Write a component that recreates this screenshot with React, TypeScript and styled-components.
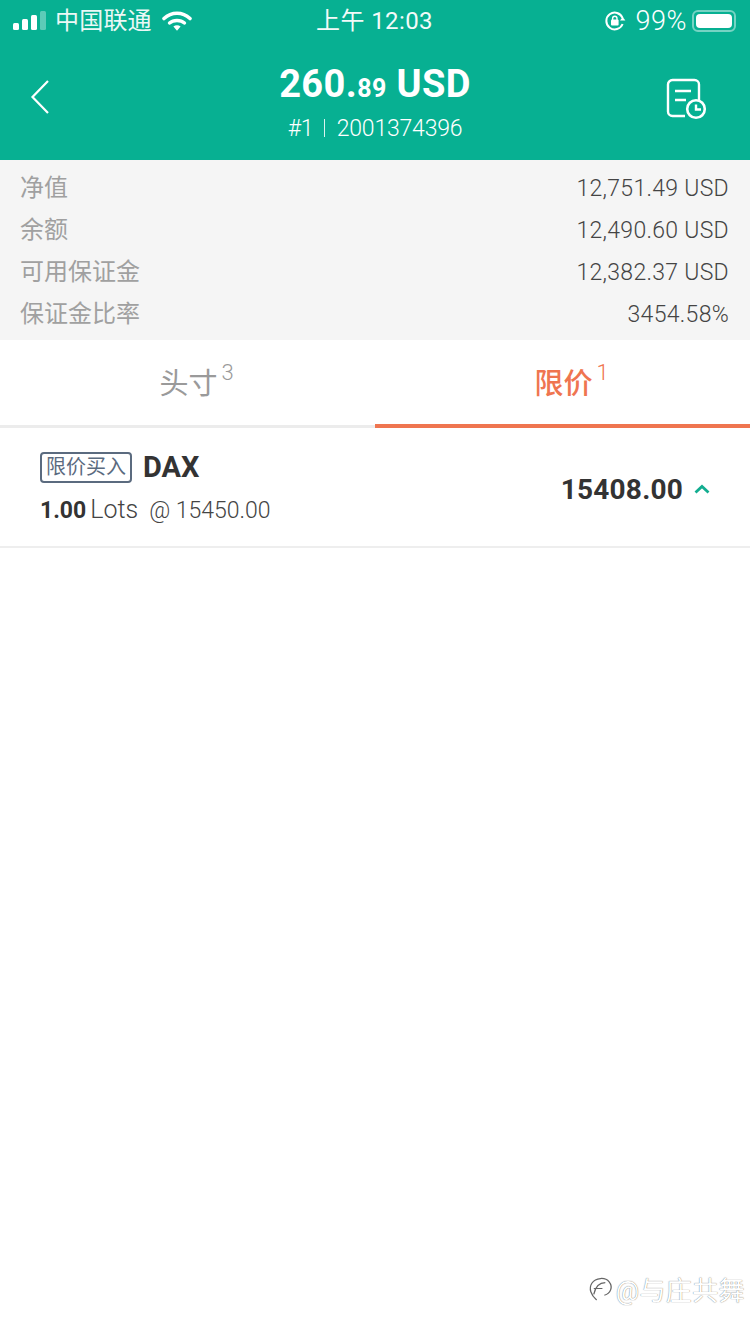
import React from 'react';
import styled, { createGlobalStyle } from 'styled-components';

const FONT = `Roboto, "Noto Sans CJK SC", sans-serif`;

const summary = [
  { label: '净值', value: '12,751.49 USD' },
  { label: '余额', value: '12,490.60 USD' },
  { label: '可用保证金', value: '12,382.37 USD' },
  { label: '保证金比率', value: '3454.58%' },
];

const App = () => (
  <>
    <GlobalStyle />
    <Page>
      <Top>
        <StatusBar>
          <StatusSide>
            <Signal viewBox="0 0 34 20" width="34" height="20">
              <rect x="0" y="12" width="6" height="7" rx="1.5" fill="#fff" />
              <rect x="9" y="8" width="6" height="11" rx="1.5" fill="#fff" />
              <rect x="18" y="4" width="6" height="15" rx="1.5" fill="#fff" />
              <rect x="27" y="0" width="6" height="19" rx="1.5" fill="#fff" opacity="0.35" />
            </Signal>
            <Carrier>中国联通</Carrier>
            <svg viewBox="0 0 30 22" width="30" height="22">
              <path d="M2 8.5C9.5 1.5 20.5 1.5 28 8.5" fill="none" stroke="#fff" strokeWidth="3.6" strokeLinecap="round" />
              <path d="M7.5 13C11.5 9.6 18.5 9.6 22.5 13" fill="none" stroke="#fff" strokeWidth="3.4" strokeLinecap="round" />
              <path d="M11.4 16.6C13.6 14.8 16.4 14.8 18.6 16.6L15 20.8Z" fill="#fff" />
            </svg>
          </StatusSide>
          <Clock>上午 12:03</Clock>
          <StatusRight>
            <svg viewBox="0 0 22 22" width="22" height="22">
              <path d="M18.6 8A8.4 8.4 0 1 0 18.6 14" fill="none" stroke="#fff" strokeWidth="2" />
              <path d="M16 10.4L21.4 10.4L18.7 7Z" fill="#fff" />
              <rect x="7" y="9.6" width="7.6" height="6" rx="1" fill="#fff" />
              <path d="M8.6 10V8.4A2.2 2.2 0 0 1 13 8.4V10" fill="none" stroke="#fff" strokeWidth="1.4" />
            </svg>
            <Percent>99%</Percent>
            <Battery>
              <BatteryFill />
            </Battery>
          </StatusRight>
        </StatusBar>
        <Header>
          <BackButton>
            <svg viewBox="0 0 20 36" width="20" height="36">
              <path d="M18 2L2.5 18L18 34" fill="none" stroke="#fff" strokeWidth="2.2" />
            </svg>
          </BackButton>
          <Titles>
            <Amount>
              260.<small>89</small> USD
            </Amount>
            <Account>#1 <Divider /> 2001374396</Account>
          </Titles>
          <HistoryButton>
            <svg viewBox="0 0 42 42" width="42" height="42">
              <path d="M20 38H7.5A4.5 4.5 0 0 1 3 33.500V6.500A4.500 4.500 0 0 1 7.500 2H29.500A4.500 4.500 0 0 1 34 6.500V22" fill="none" stroke="#fff" strokeWidth="2.4" />
              <path d="M10 13H26M10 22H21" fill="none" stroke="#fff" strokeWidth="2.4" />
              <circle cx="31" cy="31" r="8.800" fill="#07b092" stroke="#fff" strokeWidth="2.600" />
              <path d="M31 26.500V31.500H36" fill="none" stroke="#fff" strokeWidth="2.400" />
            </svg>
          </HistoryButton>
        </Header>
      </Top>
      <Summary>
        {summary.map((row) => (
          <SummaryRow key={row.label}>
            <SummaryLabel>{row.label}</SummaryLabel>
            <SummaryValue>{row.value}</SummaryValue>
          </SummaryRow>
        ))}
      </Summary>
      <Tabs>
        <Tab>
          头寸<sup>3</sup>
        </Tab>
        <Tab $active>
          限价<sup>1</sup>
        </Tab>
      </Tabs>
      <OrderRow>
        <OrderInfo>
          <OrderTitle>
            <OrderTag>限价买入</OrderTag>
            <Symbol>DAX</Symbol>
          </OrderTitle>
          <OrderMeta>
            <b>1.00</b>
            <span>Lots</span>
            <Price>@ 15450.00</Price>
          </OrderMeta>
        </OrderInfo>
        <Quote>
          15408.00
          <svg viewBox="0 0 16 10" width="16" height="10">
            <path d="M1.500 8.500L8 2.500L14.500 8.500" fill="none" stroke="#12ad90" strokeWidth="2.800" />
          </svg>
        </Quote>
      </OrderRow>
      <Watermark>
        <svg viewBox="0 0 26 30" width="25" height="29">
          <path d="M9 27C3 22 0.500 15 4 9.500C8 3.500 18 3 22 8C26 13 24 20 17 22" fill="none" stroke="#666" strokeWidth="1.300" />
          <path d="M6 21C8 12 12 9 18 9M6 15H15" fill="none" stroke="#666" strokeWidth="1.300" />
        </svg>
        @与庄共舞
      </Watermark>
    </Page>
  </>
);

const GlobalStyle = createGlobalStyle`
  html, body {
    margin: 0;
    padding: 0;
    background: #fff;
  }
`;

const Page = styled.div`
  position: relative;
  width: 750px;
  height: 1334px;
  overflow: hidden;
  background: #fff;
  font-family: ${FONT};
`;

const Top = styled.div`
  height: 160px;
  background: #07b092;
  color: #fff;
`;

const StatusBar = styled.div`
  height: 40px;
  padding: 1px 14px 0 13px;
  box-sizing: border-box;
  display: grid;
  grid-template-columns: 1fr auto 1fr;
  align-items: center;
`;

const StatusSide = styled.div`
  display: flex;
  align-items: center;
`;

const StatusRight = styled(StatusSide)`
  justify-content: flex-end;
`;

const Signal = styled.svg`
  margin-right: 8px;
`;

const Carrier = styled.span`
  font-size: 24px;
  line-height: 40px;
  letter-spacing: 0.2px;
  margin-right: 10px;
  opacity: 0.92;
`;

const Clock = styled.span`
  font-size: 24px;
  line-height: 40px;
  letter-spacing: 0.4px;
  opacity: 0.95;
`;

const Percent = styled.span`
  font-size: 27px;
  font-weight: 300;
  letter-spacing: 0.5px;
  margin: 0 5px 0 10px;
`;

const Battery = styled.div`
  width: 44px;
  height: 22px;
  box-sizing: border-box;
  border: 2px solid rgba(255, 255, 255, 0.45);
  border-radius: 6px;
  padding: 2px;
`;

const BatteryFill = styled.div`
  width: 100%;
  height: 100%;
  background: #fff;
  border-radius: 4px;
`;

const Header = styled.div`
  height: 120px;
  padding: 0 43px 6px 30px;
  box-sizing: border-box;
  display: grid;
  grid-template-columns: 100px 1fr 100px;
  align-items: center;
`;

const BackButton = styled.div`
  display: flex;
  align-items: center;
`;

const HistoryButton = styled.div`
  display: flex;
  justify-content: flex-end;
  padding-top: 4px;
`;

const Titles = styled.div`
  text-align: center;
  margin-left: 13px;
  padding-top: 12px;
`;

const Amount = styled.div`
  font-size: 38px;
  line-height: 46px;
  font-weight: 700;
  letter-spacing: 0.4px;
  small {
    font-size: 25px;
  }
`;

const Account = styled.div`
  font-size: 23px;
  line-height: 32px;
  font-weight: 300;
  letter-spacing: -0.2px;
  margin-top: 1px;
`;

const Divider = styled.span`
  display: inline-block;
  width: 1.5px;
  height: 18px;
  margin: 0 6px 0 5px;
  background: rgba(255, 255, 255, 0.85);
  vertical-align: -1px;
`;

const Summary = styled.div`
  height: 180px;
  box-sizing: border-box;
  padding: 6px 21px 0 20px;
  background: #f5f5f5;
`;

const SummaryRow = styled.div`
  height: 42px;
  display: flex;
  justify-content: space-between;
  align-items: center;
`;

const SummaryLabel = styled.span`
  font-size: 24px;
  color: #a0a0a0;
  margin-top: -4px;
`;

const SummaryValue = styled.span`
  font-size: 23px;
  font-weight: 300;
  letter-spacing: 0.3px;
  color: #444;
  margin-top: 2px;
`;

const Tabs = styled.div`
  display: grid;
  grid-template-columns: 1fr 1fr;
  height: 88px;
`;

const Tab = styled.div<{ $active?: boolean }>`
  box-sizing: border-box;
  height: 88px;
  padding: 4px 0 0 18px;
  text-align: center;
  font-size: 29px;
  line-height: 81px;
  font-weight: ${(p) => (p.$active ? 500 : 400)};
  color: ${(p) => (p.$active ? '#ef7550' : '#9a9a9a')};
  border-bottom: ${(p) => (p.$active ? '4px solid #ef7550' : '3px solid #ececec')};
  sup {
    font-size: 22px;
    font-weight: 300;
    line-height: 0;
    margin-left: 4px;
    vertical-align: 14px;
  }
`;

const OrderRow = styled.div`
  height: 120px;
  box-sizing: border-box;
  padding: 0 40px 0 40px;
  display: flex;
  justify-content: space-between;
  align-items: center;
  border-bottom: 2px solid #eeeeee;
`;

const OrderInfo = styled.div`
  display: flex;
  flex-direction: column;
  gap: 11px;
`;

const OrderTitle = styled.div`
  display: flex;
  align-items: center;
  gap: 11px;
`;

const OrderTag = styled.span`
  box-sizing: border-box;
  width: 92px;
  height: 31px;
  border: 2px solid #5b6b7f;
  border-radius: 4px;
  color: #5b6b7f;
  font-size: 20px;
  line-height: 27px;
  text-align: center;
`;

const Symbol = styled.span`
  font-size: 29px;
  font-weight: 700;
  color: #333;
`;

const OrderMeta = styled.div`
  display: flex;
  align-items: baseline;
  color: #444;
  font-size: 25px;
  font-weight: 300;
  b {
    color: #333;
    font-size: 23px;
    font-weight: 700;
    margin-right: 4px;
  }
`;

const Price = styled.span`
  margin-left: 11px;
  font-size: 23px;
`;

const Quote = styled.div`
  display: flex;
  align-items: center;
  gap: 11px;
  margin-top: 4px;
  font-size: 28px;
  font-weight: 700;
  color: #333;
  letter-spacing: 0.2px;
`;

const Watermark = styled.div`
  position: absolute;
  right: 5px;
  bottom: 27px;
  display: flex;
  align-items: center;
  gap: 3px;
  font-size: 26px;
  letter-spacing: 0.4px;
  color: #fff;
  text-shadow: 0 0 1px #555;
`;

export default App;
